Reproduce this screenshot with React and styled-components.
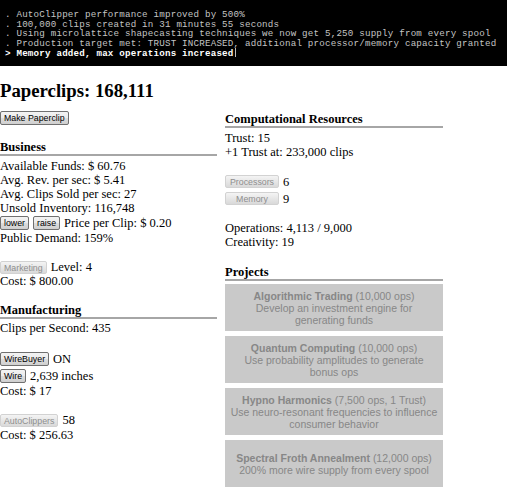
import React from 'react';
import styled, { createGlobalStyle, css } from 'styled-components';

const LOG = [
  '. AutoClipper performance improved by 500%',
  '. 100,000 clips created in 31 minutes 55 seconds',
  '. Using microlattice shapecasting techniques we now get 5,250 supply from every spool',
  '. Production target met: TRUST INCREASED, additional processor/memory capacity granted'
];

const PROJECTS = [
  { title: 'Algorithmic Trading', cost: '(10,000 ops)', desc: 'Develop an investment engine for generating funds' },
  { title: 'Quantum Computing', cost: '(10,000 ops)', desc: 'Use probability amplitudes to generate bonus ops' },
  { title: 'Hypno Harmonics', cost: '(7,500 ops, 1 Trust)', desc: 'Use neuro-resonant frequencies to influence consumer behavior' },
  { title: 'Spectral Froth Annealment', cost: '(12,000 ops)', desc: '200% more wire supply from every spool' }
];

export default function App() {
  return (
    <>
      <GlobalStyle />
      <Console>
        {LOG.map((l, i) => <ConsoleLine key={i}>{l}</ConsoleLine>)}
        <ConsoleLine $current>&gt; Memory added, max operations increased<Cursor /></ConsoleLine>
      </Console>

      <Page>
        <LeftCol>
          <Title>Paperclips: 168,111</Title>
          <ControlRow $gap={9} $h={14}>
            <Btn>Make Paperclip</Btn>
          </ControlRow>

          <SectionHead $gap={15}>Business</SectionHead>
          <Line $gap={3}>Available Funds: $ 60.76</Line>
          <Line>Avg. Rev. per sec: $ 5.41</Line>
          <Line>Avg. Clips Sold per sec: 27</Line>
          <Line>Unsold Inventory: 116,748</Line>
          <ControlRow $h={16}>
            <Btn>lower</Btn>
            <Btn>raise</Btn>
            <span>Price per Clip: $ 0.20</span>
          </ControlRow>
          <Line>Public Demand: 159%</Line>

          <ControlRow $gap={15} $h={14}>
            <Btn disabled>Marketing</Btn>
            <span>Level: 4</span>
          </ControlRow>
          <Line>Cost: $ 800.00</Line>

          <SectionHead $gap={15}>Manufacturing</SectionHead>
          <Line $gap={2}>Clips per Second: 435</Line>

          <ControlRow $gap={15} $h={17}>
            <Btn>WireBuyer</Btn>
            <span>ON</span>
          </ControlRow>
          <ControlRow $h={17}>
            <Btn>Wire</Btn>
            <span>2,639 inches</span>
          </ControlRow>
          <Line>Cost: $ 17</Line>

          <ControlRow $gap={14} $h={16}>
            <Btn disabled>AutoClippers</Btn>
            <span>58</span>
          </ControlRow>
          <Line>Cost: $ 256.63</Line>
        </LeftCol>

        <RightCol>
          <SectionHead>Computational Resources</SectionHead>
          <Line $gap={3}>Trust: 15</Line>
          <Line>+1 Trust at: 233,000 clips</Line>

          <ControlRow $gap={14} $h={17}>
            <Btn disabled $width={54}>Processors</Btn>
            <span>6</span>
          </ControlRow>
          <ControlRow $h={17}>
            <Btn disabled $width={54}>Memory</Btn>
            <span>9</span>
          </ControlRow>

          <Line $gap={14}>Operations: 4,113 / 9,000</Line>
          <Line>Creativity: 19</Line>

          <SectionHead $gap={16}>Projects</SectionHead>
          <ProjectList>
            {PROJECTS.map(p => (
              <ProjectCard key={p.title}>
                <div><b>{p.title}</b> {p.cost}</div>
                <div>{p.desc}</div>
              </ProjectCard>
            ))}
          </ProjectList>
        </RightCol>
      </Page>
    </>
  );
}

const GlobalStyle = createGlobalStyle`
  body {
    margin: 0;
    background: #fff;
    color: #000;
    font-family: "Liberation Serif", "Times New Roman", serif;
    font-size: 12.5px;
  }
`;

const Console = styled.div`
  background: #000;
  height: 66px;
  box-sizing: border-box;
  padding: 10px 0 0 5px;
  font-family: "Liberation Mono", "DejaVu Sans Mono", monospace;
  font-size: 9.2px;
  letter-spacing: 0.2px;
  line-height: 9.5px;
`;

const ConsoleLine = styled.div`
  white-space: pre;
  color: ${p => p.$current ? '#fff' : '#c4c4c4'};
  font-weight: ${p => p.$current ? 700 : 400};
`;

const Cursor = styled.span`
  display: inline-block;
  width: 1px;
  height: 9px;
  margin-left: 1px;
  vertical-align: -1px;
  background: #bbb;
`;

const Page = styled.div`
  display: flex;
  gap: 8px;
  align-items: flex-start;
`;

const LeftCol = styled.div`
  width: 217px;
`;

const RightCol = styled.div`
  width: 218px;
  padding-top: 46px;
`;

const Title = styled.h2`
  margin: 14px 0 0;
  font-size: 18.75px;
  line-height: 22px;
  font-weight: 700;
`;

const SectionHead = styled.div`
  margin-top: ${p => p.$gap || 0}px;
  font-weight: 700;
  line-height: 14px;
  border-bottom: 2px solid #a6a6a6;
`;

const Line = styled.div`
  margin-top: ${p => p.$gap || 0}px;
  line-height: 14px;
  white-space: nowrap;
`;

const ControlRow = styled.div`
  display: flex;
  align-items: center;
  gap: 4px;
  margin-top: ${p => p.$gap || 0}px;
  height: ${p => p.$h || 14}px;
  line-height: 14px;
  white-space: nowrap;
`;

const Btn = styled.button`
  box-sizing: border-box;
  height: 14px;
  width: ${p => p.$width ? `${p.$width}px` : 'auto'};
  padding: 0 3px;
  margin: 0;
  font-family: "Liberation Sans", Arial, sans-serif;
  font-size: 8.8px;
  line-height: 12px;
  border-radius: 2px;
  border: 1px solid #707070;
  color: #000;
  background: linear-gradient(#f3f3f3 0%, #ebebeb 50%, #dddddd 51%, #cfcfcf 100%);
  cursor: pointer;

  ${p => p.disabled && css`
    height: 13px;
    border-color: #d2d2d2;
    color: #8e8e8e;
    background: linear-gradient(#f4f4f4, #d9d9d9);
    cursor: default;
  `}
`;

const ProjectList = styled.div`
  display: flex;
  flex-direction: column;
  gap: 5px;
  margin-top: 3px;
`;

const ProjectCard = styled.div`
  height: 47px;
  display: flex;
  flex-direction: column;
  justify-content: center;
  background: #c9c9c9;
  color: #878787;
  text-align: center;
  font-family: "Liberation Sans", Arial, sans-serif;
  font-size: 10.5px;
  line-height: 12px;
  padding: 0 5.5px;

  b {
    font-weight: 700;
  }
`;
